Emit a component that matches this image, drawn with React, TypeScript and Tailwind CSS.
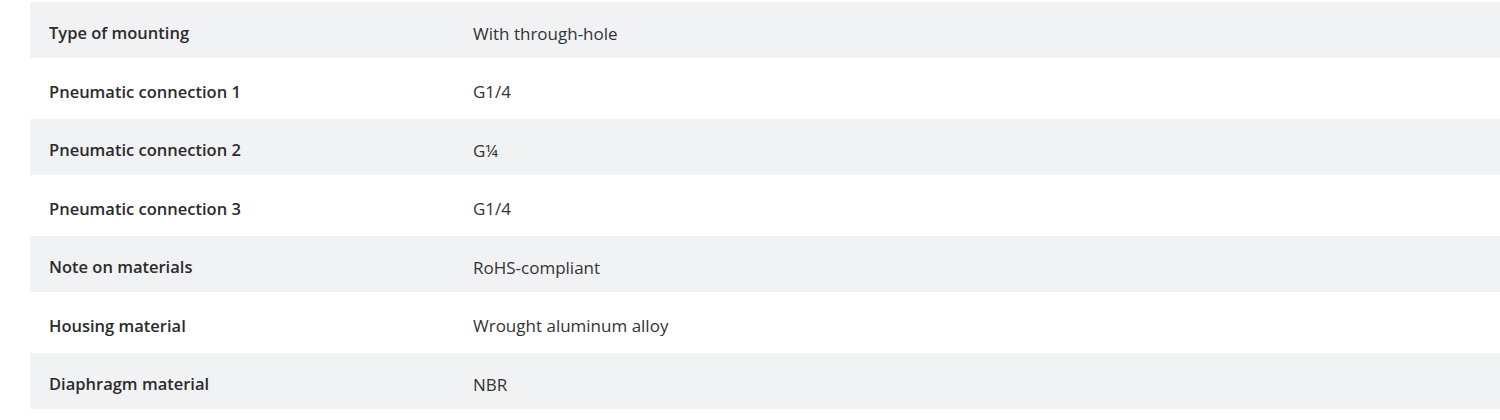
const rows: [string, string][] = [
  ['Type of mounting', 'With through-hole'],
  ['Pneumatic connection 1', 'G1/4'],
  ['Pneumatic connection 2', 'G¼'],
  ['Pneumatic connection 3', 'G1/4'],
  ['Note on materials', 'RoHS-compliant'],
  ['Housing material', 'Wrought aluminum alloy'],
  ['Diaphragm material', 'NBR'],
]

export default function App() {
  return (
    <div className="w-[1500px] h-[420px] bg-white pt-[2px] pl-[30px] font-['Open_Sans',sans-serif] text-[17px] text-[#333]">
      {rows.map(([label, value], i) => (
        <div
          key={label}
          className={`flex items-center pt-[7px] ${i % 2 === 0 ? 'h-[56px] bg-[#f1f2f4]' : 'h-[61px] bg-white'}`}
        >
          <div className="w-[443px] pl-[19px] text-[16.5px] font-semibold text-[#2b2b2b]">{label}</div>
          <div>{value}</div>
        </div>
      ))}
    </div>
  )
}
